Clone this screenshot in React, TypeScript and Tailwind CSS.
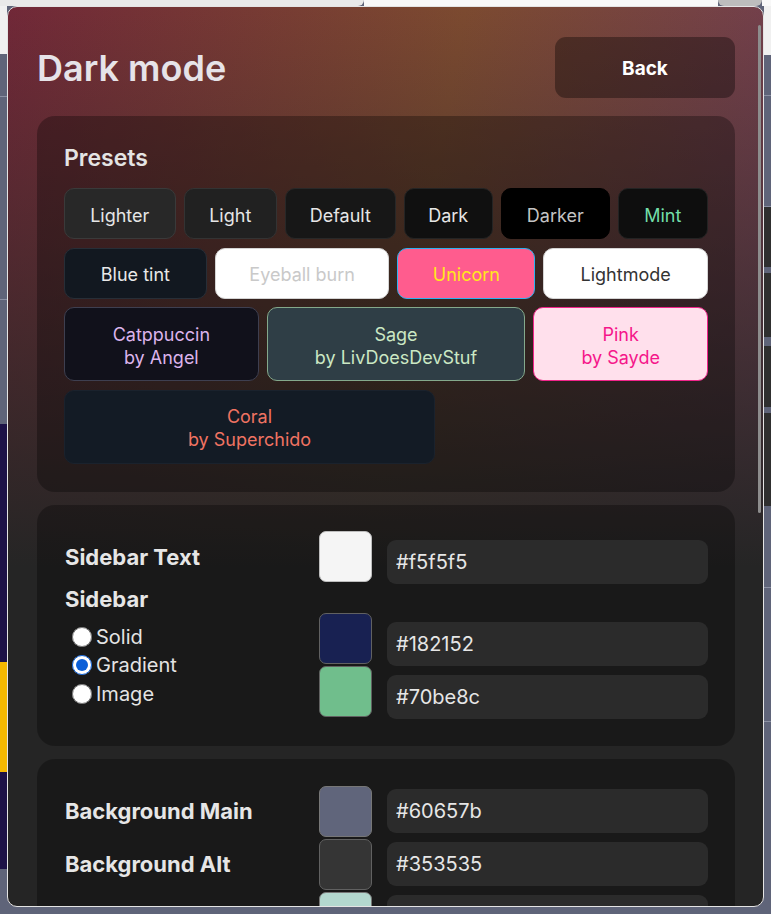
import React, { useState } from 'react';

type Preset = {
  name: string;
  by?: string;
  size: string;
  look: string;
};

// rows of preset buttons, widths taken from the design
const presetRows: Preset[][] = [
  [
    { name: 'Lighter', size: 'flex-[1_1_111px] h-[51px]', look: 'bg-[#282828] border-[#3a3a3a] text-[#e6e6e6]' },
    { name: 'Light', size: 'flex-[1_1_93px] h-[51px]', look: 'bg-[#212121] border-[#333333] text-[#e6e6e6]' },
    { name: 'Default', size: 'flex-[1_1_110px] h-[51px]', look: 'bg-[#171717] border-[#282828] text-[#e6e6e6]' },
    { name: 'Dark', size: 'flex-[1_1_89px] h-[51px]', look: 'bg-[#101010] border-[#242424] text-[#e6e6e6]' },
    { name: 'Darker', size: 'flex-[1_1_108px] h-[51px]', look: 'bg-black border-black text-[#c4c4c4]' },
    { name: 'Mint', size: 'flex-[1_1_90px] h-[51px]', look: 'bg-[#0e0e0e] border-[#232323] text-[#72dea8]' },
  ],
  [
    { name: 'Blue tint', size: 'flex-[1_1_143px] h-[51px]', look: 'bg-[#121820] border-[#272e37] text-[#e8e8e8]' },
    { name: 'Eyeball burn', size: 'flex-[1_1_175px] h-[51px]', look: 'bg-white border-[#d4d4d4] text-[#c9c9c9]' },
    { name: 'Unicorn', size: 'flex-[1_1_138px] h-[51px]', look: 'bg-[#ff5c8e] border-[#2cb2f0] text-[#ffe81c]' },
    { name: 'Lightmode', size: 'flex-[1_1_165px] h-[51px]', look: 'bg-white border-[#d4d4d4] text-[#333333]' },
  ],
  [
    { name: 'Catppuccin', by: 'by Angel', size: 'flex-[1_1_195px] h-[74px]', look: 'bg-[#11111b] border-[#3e3f50] text-[#dcb4ec]' },
    { name: 'Sage', by: 'by LivDoesDevStuf', size: 'flex-[1_1_259px] h-[74px]', look: 'bg-[#2f3e46] border-[#84a98c] text-[#cbe8c4]' },
    { name: 'Pink', by: 'by Sayde', size: 'flex-[1_1_175px] h-[74px]', look: 'bg-[#ffe0ec] border-[#f0248a] text-[#f5168a]' },
  ],
  [
    { name: 'Coral', by: 'by Superchido', size: 'w-[371px] flex-none h-[74px]', look: 'bg-[#131b25] border-[#1a222d] text-[#f07362]' },
  ],
];

const ColorField = ({ hex, swatch, low }: { hex: string; swatch: string; low?: boolean }) => (
  <div className="flex items-start gap-[15px] h-[53px] flex-1 min-w-0">
    <div className={`w-[53px] h-[51px] rounded-[7px] border border-[#616161] shrink-0 ${swatch}`} />
    <input
      type="text"
      defaultValue={hex}
      className={`flex-1 min-w-0 w-0 h-[44px] px-[9px] rounded-[9px] bg-[#2b2b2b] text-[20px] text-[#e6e6e6] outline-none ${low ? 'mt-[9px]' : 'mt-[3.5px]'}`}
    />
  </div>
);

export default function App() {
  const [sidebarMode, setSidebarMode] = useState('gradient');

  return (
    <div className="relative w-[771px] h-[914px] overflow-hidden flex flex-col bg-[#5f6479] font-[Inter,sans-serif]">
      {/* page behind the dialog */}
      <div className="h-[6px] flex">
        <div className="w-[364px] bg-[#e9e9e9] rounded-br-[6px]" />
        <div className="flex-1 bg-[#f8f8f8]" />
        <div className="w-[44px] bg-[#bdbdbd] rounded-b-full" />
        <div className="w-[9px] bg-[#f8f8f8]" />
      </div>
      <div className="flex-1 flex">
        <div className="w-[7px] flex flex-col">
          <div className="h-[48px] bg-[#f0f0f0]" />
          <div className="h-[43px] border-b border-[#8b90a3]" />
          <div className="h-[203px] border-b border-[#8b90a3]" />
          <div className="h-[124px]" />
          <div className="h-[238px] bg-[#1d1247]" />
          <div className="h-[110px] bg-[#f5b800]" />
          <div className="h-[97px] bg-[#1d1247]" />
        </div>
        <div className="flex-1" />
        <div className="w-[7px] flex flex-col">
          <div className="h-[49px] bg-[#f0f0f0]" />
          <div className="h-[41px] border-b border-[#8b90a3]" />
          <div className="h-[111px] border-b border-[#8b90a3]" />
          <div className="h-[60px] bg-[#2f2f2f]" />
          <div className="h-[6px]" />
          <div className="h-[64px] bg-[#2f2f2f]" />
          <div className="h-[9px]" />
          <div className="h-[61px] bg-[#2f2f2f]" />
          <div className="h-[6px]" />
          <div className="h-[93px] bg-[#2f2f2f]" />
          <div className="h-[82px] border-b border-[#8b90a3]" />
          <div className="h-[134px] border-b border-[#8b90a3]" />
        </div>
      </div>

      {/* dialog */}
      <div className="absolute left-[7px] top-[6px] w-[757px] h-[901px] rounded-[10px] border border-[#e4e4e4] overflow-hidden bg-[#252525] bg-[image:linear-gradient(180deg,rgba(37,37,37,0)_0px,#252525_560px),linear-gradient(100deg,#712838_0%,#7c4a30_50%,#6e3a58_100%)]">
        <div className="pl-[29px] pr-[28px] pt-[30px]">
          <div className="flex items-center justify-between">
            <h1 className="text-[36px] font-semibold text-[#e6e3e8] leading-[44px]">Dark mode</h1>
            <button className="w-[180px] h-[61px] pt-[3px] rounded-[11px] bg-black/35 text-white text-[19px] font-bold">
              Back
            </button>
          </div>

          <section className="mt-[18px] rounded-[18px] bg-black/30 px-[27px] pt-[28px] pb-[28px]">
            <h2 className="text-[23px] leading-[28px] font-semibold text-[#e4e4e4] mb-[16px]">Presets</h2>
            <div className="flex flex-col gap-[8.5px]">
              {presetRows.map((row, i) => (
                <div key={i} className="flex gap-[8px]">
                  {row.map((p) => (
                    <button
                      key={p.name}
                      className={`${p.size} ${p.look} border rounded-[10px] pt-[3px] text-[18px] leading-[23px] text-center`}
                    >
                      {p.name}
                      {p.by && (
                        <>
                          <br />
                          {p.by}
                        </>
                      )}
                    </button>
                  ))}
                </div>
              ))}
            </div>
          </section>

          <section className="mt-[13px] rounded-[18px] bg-black/30 pl-[28px] pr-[27px] pt-[26px] pb-[27px] text-[#e6e6e6]">
            <div className="flex items-center">
              <div className="w-[254px] shrink-0 text-[22px] font-bold leading-[28px]">Sidebar Text</div>
              <ColorField hex="#f5f5f5" swatch="bg-[#f5f5f5] border-[#bdbdbd]" low />
            </div>
            <div className="flex">
              <div className="w-[254px] shrink-0">
                <div className="text-[22px] font-bold leading-[30px]">Sidebar</div>
                <div className="mt-[9px] flex flex-col">
                  {['Solid', 'Gradient', 'Image'].map((mode) => (
                    <label key={mode} className="flex items-center gap-[4px] pl-[7px] h-[28.5px] text-[20px] text-[#e4e4e4]">
                      <input
                        type="radio"
                        name="sidebar"
                        checked={sidebarMode === mode.toLowerCase()}
                        onChange={() => setSidebarMode(mode.toLowerCase())}
                        className="w-5 h-5 m-0 accent-[#0b5fd8]"
                      />
                      {mode}
                    </label>
                  ))}
                </div>
              </div>
              <div className="flex-1 min-w-0 pt-[29px] flex flex-col">
                <ColorField hex="#182152" swatch="bg-[#182152]" low />
                <ColorField hex="#70be8c" swatch="bg-[#70be8c]" low />
              </div>
            </div>
          </section>

          <section className="mt-[13px] rounded-[18px] bg-black/30 pl-[28px] pr-[27px] pt-[27px] pb-[27px] text-[#e6e6e6]">
            <div className="flex items-start">
              <div className="w-[254px] shrink-0 h-[53px] flex items-center pb-[2px] text-[22px] font-bold">Background Main</div>
              <ColorField hex="#60657b" swatch="bg-[#60657b] border-[#777777]" />
            </div>
            <div className="flex items-start">
              <div className="w-[254px] shrink-0 h-[53px] flex items-center pb-[2px] text-[22px] font-bold">Background Alt</div>
              <ColorField hex="#353535" swatch="bg-[#353535] border-[#6f6f6f]" />
            </div>
            <div className="flex items-start">
              <div className="w-[254px] shrink-0 h-[53px]" />
              <ColorField hex="" swatch="bg-[#b3d8cf] border-[#777777]" />
            </div>
          </section>
        </div>

        {/* scrollbar thumb */}
        <div className="absolute right-[2px] top-[18px] w-[3px] h-[488px] rounded-full bg-[#8d8d8d]" />
      </div>
    </div>
  );
}
